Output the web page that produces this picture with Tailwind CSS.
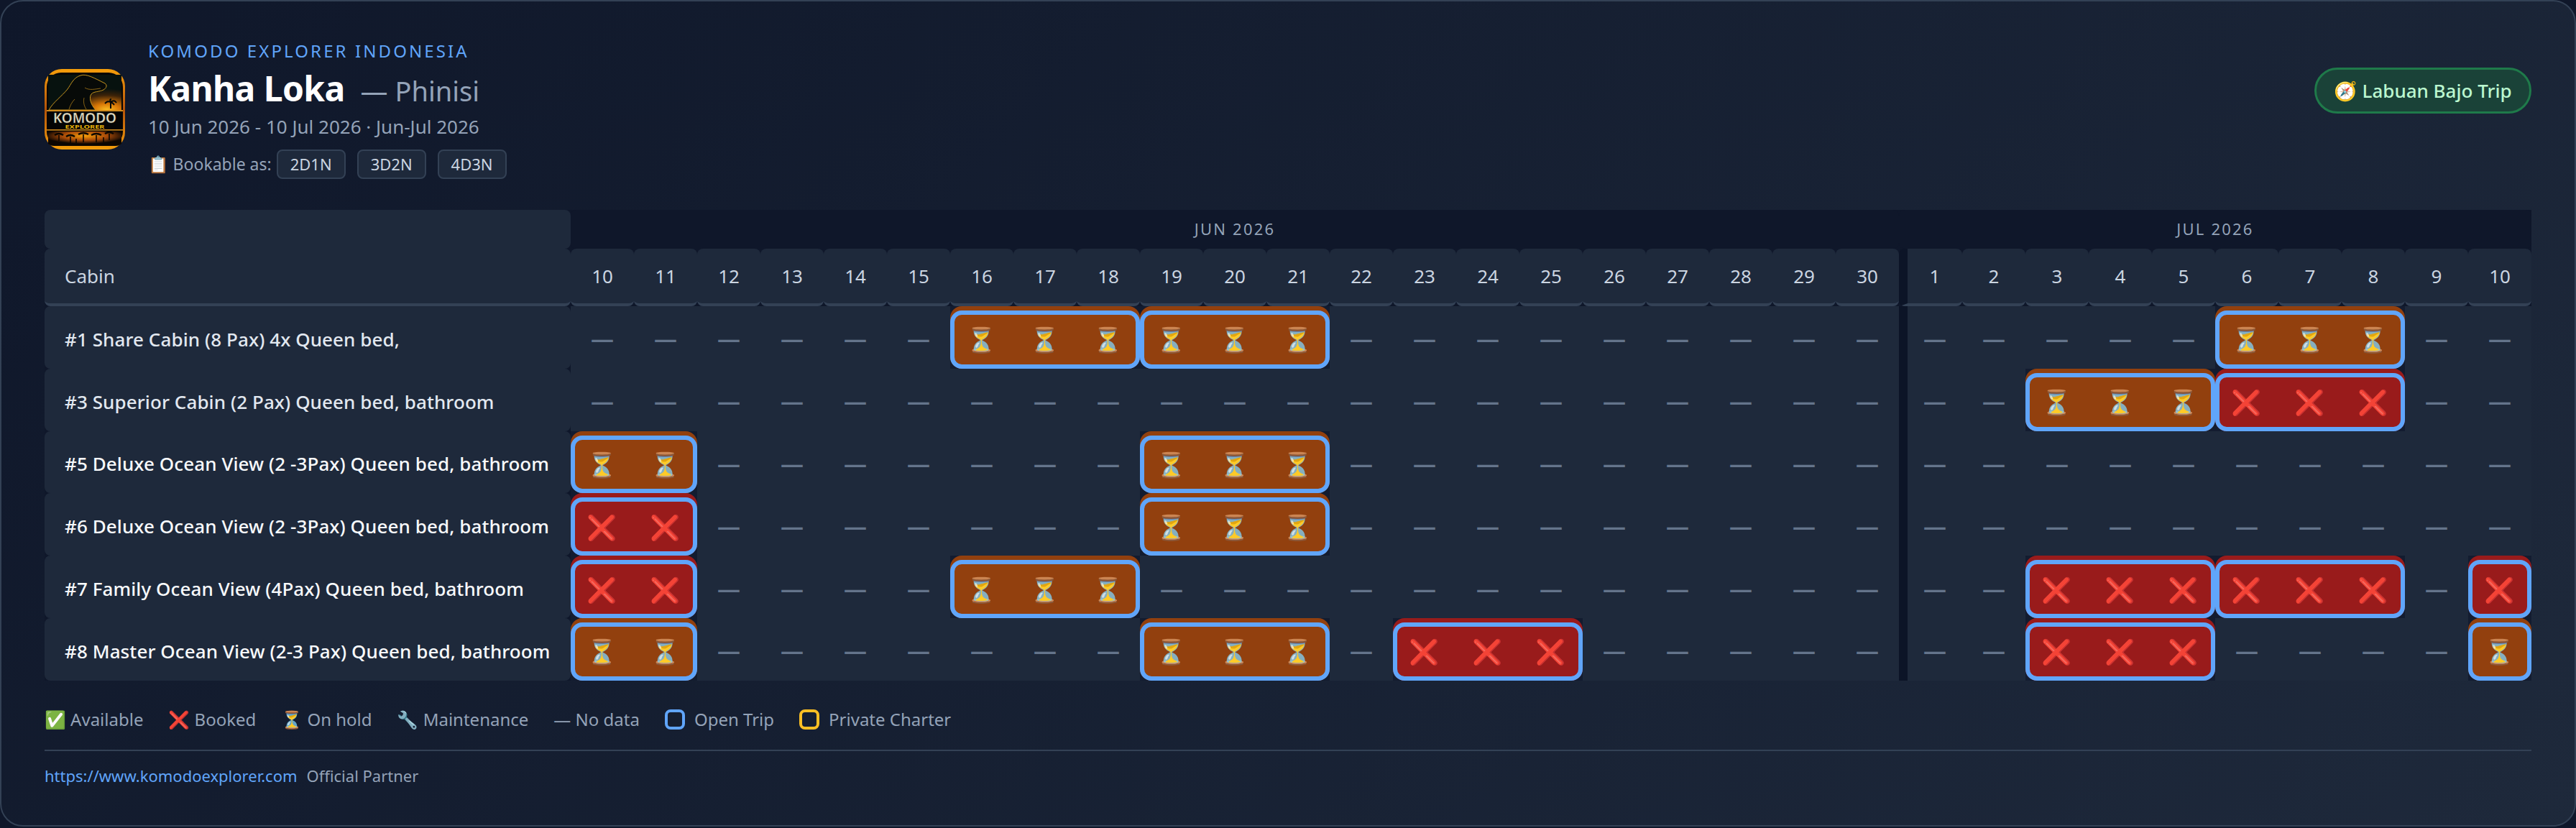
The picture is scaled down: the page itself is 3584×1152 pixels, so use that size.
<!DOCTYPE html>
<html lang="en">
<head>
    <meta charset="UTF-8">
    <title>Kanha Loka - Komodo Explorer</title>
    <script src="https://cdn.jsdelivr.net/npm/@tailwindcss/browser@4"></script>
</head>
<body class="bg-[#0f172a] font-['Noto_Sans','Noto_Color_Emoji',sans-serif]">

    <div class="h-[1150px] w-[3584px] rounded-[32px] border-2 border-[#334155] bg-linear-135 from-[#0f172a] to-[#1e293b] px-[60px] pt-[52px]">

        <!-- Header -->
        <div class="flex h-[238px] items-start justify-between">
            <div class="flex items-center gap-[32px]">
                <svg class="h-[112px] w-[112px] shrink-0" viewBox="0 0 112 112">
                    <defs>
                        <linearGradient id="frame" x1="0" y1="0" x2="0" y2="1">
                            <stop offset="0" stop-color="#f59e0b"/><stop offset=".5" stop-color="#b45309"/><stop offset="1" stop-color="#f59e0b"/>
                        </linearGradient>
                        <radialGradient id="sunTop" cx=".8" cy="1" r=".6">
                            <stop offset="0" stop-color="#fbbf24"/><stop offset=".3" stop-color="#d97706"/><stop offset=".7" stop-color="#3b2208"/><stop offset="1" stop-color="#07120f"/>
                        </radialGradient>
                        <radialGradient id="sunLow" cx=".5" cy=".3" r=".55">
                            <stop offset="0" stop-color="#f59e0b"/><stop offset=".55" stop-color="#a84a08"/><stop offset="1" stop-color="#0c0602"/>
                        </radialGradient>
                    </defs>
                    <rect width="112" height="112" rx="24" fill="url(#frame)"/>
                    <rect x="3" y="5" width="106" height="102" rx="20" fill="#050505"/>
                    <path d="M5 8h102v49H5z" fill="url(#sunTop)"/>
                    <path d="M6 57C12 46 24 38 32 28 37 21 40 12 50 9 58 6 70 13 84 20 87 22 87 26 82 29 76 32 68 31 65 35 62 39 63 48 71 57Z" fill="#070a08" stroke="#c9961f" stroke-width="1"/>
                    <path d="M56 26C62 30 70 28 78 27M34 56C36 50 38 46 42 42M58 56C54 50 54 44 55 40" fill="none" stroke="#a87a18" stroke-width=".8"/>
                    <path d="M92 55V46M92 46C88 44 86 46 84 48M92 46C90 42 92 42 93 42M92 46C96 43 98 44 100 47M92 46C95 47 96 49 97 50" fill="none" stroke="#070a08" stroke-width="2"/>
                    <rect x="3" y="57" width="106" height="2" fill="#d08a1c"/>
                    <rect x="3" y="84" width="106" height="1.6" fill="#d08a1c"/>
                    <text x="56" y="75" text-anchor="middle" textLength="88" lengthAdjust="spacingAndGlyphs" font-family="Noto Sans" font-weight="600" font-size="20" fill="#e7e1c8" stroke="#4a4636" stroke-width=".4">KOMODO</text>
                    <text x="56" y="82.5" text-anchor="middle" textLength="55" lengthAdjust="spacingAndGlyphs" font-family="Noto Sans" font-weight="700" font-size="7" fill="#eab308">EXPLORER</text>
                    <path d="M5 87h102v17q-3 3-8 3H13q-5 0-8-3Z" fill="url(#sunLow)"/>
                    <path d="M20 100V92M36 103V94M54 102V91M72 102V92M90 99V90M44 103V97M82 102V95" stroke="#0a0702" stroke-width="1.6" fill="none"/>
                    <path d="M14 92q6-4 12 0M30 94q6-4 12 0M47 91q7-4 14 0M65 92q7-4 14 0M84 90q6-4 12 0" stroke="#0a0702" stroke-width="2.4" fill="none"/>
                </svg>
                <div class="flex flex-col">
                    <div class="text-[24px] leading-[34px] tracking-[3.1px] text-[#60a5fa]">KOMODO EXPLORER INDONESIA</div>
                    <div class="mt-[4px] flex items-baseline gap-[22px] leading-[62px]">
                        <span class="text-[48px] font-bold tracking-[-0.6px] text-white">Kanha Loka</span>
                        <span class="text-[38px] text-[#94a3b8]">— Phinisi</span>
                    </div>
                    <div class="mt-[4px] text-[26px] leading-[30px] text-[#94a3b8]">10 Jun 2026 - 10 Jul 2026 · Jun-Jul 2026</div>
                    <div class="mt-[17px] flex items-center text-[22px] text-[#94a3b8]">
                        <span class="mr-[1px] text-[23px]">📋 Bookable as:</span>
                        <span class="ml-[6px] flex h-[41px] items-center rounded-[8px] border-2 border-[#334155] bg-[#1e293b] px-[17px] text-[#cbd5e1]">2D1N</span>
                        <span class="ml-[16px] flex h-[41px] items-center rounded-[8px] border-2 border-[#334155] bg-[#1e293b] px-[17px] text-[#cbd5e1]">3D2N</span>
                        <span class="ml-[16px] flex h-[41px] items-center rounded-[8px] border-2 border-[#334155] bg-[#1e293b] px-[17px] text-[#cbd5e1]">4D3N</span>
                    </div>
                </div>
            </div>
            <div class="mt-[40px] flex h-[64px] w-[302px] items-center justify-center rounded-full border-[3px] border-[#1f7a4a] bg-[#1a4238] text-[26px] font-medium text-[#bbf7d0]">🧭 Labuan Bajo Trip</div>
        </div>

        <!-- Calendar -->
        <div id="calendar" class="grid grid-cols-[732px_repeat(31,88px)] bg-[#0f172a]">
            <div class="h-[54px] rounded-[8px] bg-[#1e293b]"></div>
            <div class="col-span-21 flex h-[54px] items-center justify-center rounded-[8px] bg-[#0f172a] pb-[2px] text-[22px] tracking-[2.2px] text-[#94a3b8]">JUN 2026</div>
            <div class="col-span-10 flex h-[54px] items-center justify-center rounded-[8px] bg-[#0f172a] pb-[2px] text-[22px] tracking-[2.2px] text-[#94a3b8]">JUL 2026</div>
            <div class="flex h-[80px] items-center rounded-[8px] border-b-4 border-[#334155] bg-[#1e293b] pl-[28px] text-[26px] text-[#cbd5e1]">Cabin</div>
        </div>

        <!-- Legend -->
        <div class="mt-[36px] flex h-[36px] items-center gap-[35px] text-[24px] text-[#94a3b8]">
            <span>✅ Available</span>
            <span>❌ Booked</span>
            <span>⏳ On hold</span>
            <span>🔧 Maintenance</span>
            <span>— No data</span>
            <span class="flex items-center gap-[13px]"><span class="h-[28px] w-[28px] rounded-[8px] border-4 border-[#60a5fa]"></span>Open Trip</span>
            <span class="flex items-center gap-[13px]"><span class="h-[28px] w-[28px] rounded-[8px] border-4 border-[#fbbf24]"></span>Private Charter</span>
        </div>

        <!-- Footer -->
        <div class="mt-[24px] flex h-[72px] items-center gap-[13px] border-t-2 border-[#334155] text-[22px] text-[#94a3b8]">
            <a class="text-[#60a5fa]">https://www.komodoexplorer.com</a>
            <span>Official Partner</span>
        </div>
    </div>

    <script>
        const calendar = document.getElementById('calendar');

        // day index: Jun 10 = 0 ... Jun 30 = 20, Jul 1 = 21 ... Jul 10 = 30
        const days = [];
        for (let d = 10; d <= 30; d++) days.push(d);
        for (let d = 1; d <= 10; d++) days.push(d);

        const jun = (d) => d - 10;
        const jul = (d) => d + 20;

        const cabins = [
            { name: '#1 Share Cabin (8 Pax) 4x Queen bed,', ink: 'text-[#e2e8f0]', trips: [[jun(16), 3, 'hold'], [jun(19), 3, 'hold'], [jul(6), 3, 'hold']] },
            { name: '#3 Superior Cabin (2 Pax) Queen bed, bathroom', ink: 'text-[#e2e8f0]', trips: [[jul(3), 3, 'hold'], [jul(6), 3, 'booked']] },
            { name: '#5 Deluxe Ocean View (2 -3Pax) Queen bed, bathroom', ink: 'text-[#f8fafc]', trips: [[jun(10), 2, 'hold'], [jun(19), 3, 'hold']] },
            { name: '#6 Deluxe Ocean View (2 -3Pax) Queen bed, bathroom', ink: 'text-[#f8fafc]', trips: [[jun(10), 2, 'booked'], [jun(19), 3, 'hold']] },
            { name: '#7 Family Ocean View (4Pax) Queen bed, bathroom', ink: 'text-[#f8fafc]', trips: [[jun(10), 2, 'booked'], [jun(16), 3, 'hold'], [jul(3), 3, 'booked'], [jul(6), 3, 'booked'], [jul(10), 1, 'booked']] },
            { name: '#8 Master Ocean View (2-3 Pax) Queen bed, bathroom', ink: 'text-[#f8fafc]', trips: [[jun(10), 2, 'hold'], [jun(19), 3, 'hold'], [jun(23), 3, 'booked'], [jul(3), 3, 'booked'], [jul(10), 1, 'hold']] },
        ];

        const spans = { 1: 'col-span-1', 2: 'col-span-2', 3: 'col-span-3' };
        const fills = { hold: 'bg-[#92400e]', booked: 'bg-[#991b1b]' };
        const glyphs = { hold: '⏳', booked: '❌' };

        let html = '';

        // day header row
        days.forEach((d, i) => {
            const edge = i === 21 ? 'border-l-[12px] border-l-[#0c1427]' : '';
            html += `<div class="flex h-[80px] items-center justify-center rounded-[8px] border-b-4 border-b-[#334155] bg-[#1e293b] text-[26px] text-[#cbd5e1] ${edge}">${d}</div>`;
        });

        cabins.forEach((cabin) => {
            html += `<div class="flex h-[86.8px] items-center rounded-[8px] bg-[#1e293b] pt-[6px] pl-[28px] text-[26px] font-medium tracking-[0.09px] ${cabin.ink}">${cabin.name}</div>`;
            let i = 0;
            while (i < days.length) {
                const trip = cabin.trips.find((t) => t[0] === i);
                if (trip) {
                    const [start, len, status] = trip;
                    let icons = '';
                    for (let k = 0; k < len; k++) icons += `<span class="w-[88px] text-center text-[34px] leading-none">${glyphs[status]}</span>`;
                    html += `<div class="${spans[len]} h-[86.8px] bg-[#131c30]"><div class="h-full rounded-[16px] pt-[6px] ${fills[status]}"><div class="flex h-full items-center rounded-[16px] border-[6px] border-[#60a5fa]"><div class="-mx-[6px] flex">${icons}</div></div></div></div>`;
                    i = start + len;
                } else {
                    const edge = i === 21 ? 'border-l-[12px] border-l-[#0c1427]' : '';
                    html += `<div class="flex h-[86.8px] items-center justify-center bg-[#1e293b] pt-[4px] text-[32px] font-semibold text-[#64748b] ${edge}">—</div>`;
                    i++;
                }
            }
        });

        calendar.insertAdjacentHTML('beforeend', html);
    </script>
</body>
</html>
